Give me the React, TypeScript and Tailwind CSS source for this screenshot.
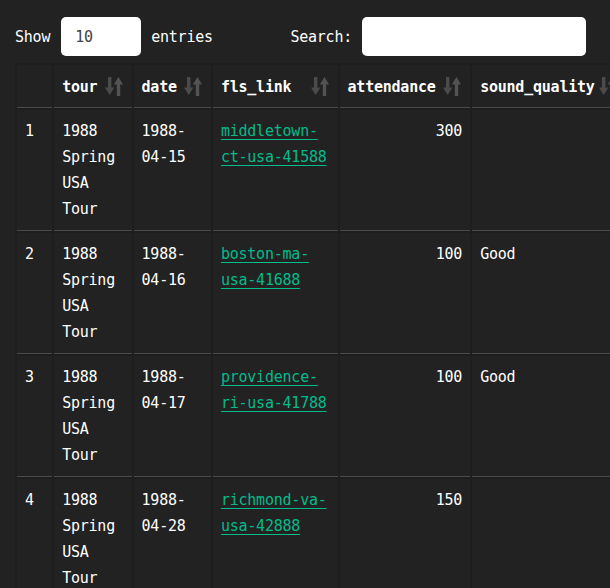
import React from "react";

const FONT = { fontFamily: '"DejaVu Sans Mono", "Liberation Mono", monospace' };

interface Show {
  tour: string;
  date: string;
  link: string;
  attendance: number;
  sound: string;
}

const shows: Show[] = [
  { tour: "1988 Spring USA Tour", date: "1988-04-15", link: "middletown-ct-usa-41588", attendance: 300, sound: "" },
  { tour: "1988 Spring USA Tour", date: "1988-04-16", link: "boston-ma-usa-41688", attendance: 100, sound: "Good" },
  { tour: "1988 Spring USA Tour", date: "1988-04-17", link: "providence-ri-usa-41788", attendance: 100, sound: "Good" },
  { tour: "1988 Spring USA Tour", date: "1988-04-28", link: "richmond-va-usa-42888", attendance: 150, sound: "" },
  { tour: "1988 Spring USA Tour", date: "1988-04-29", link: "trenton-nj-usa-42988", attendance: 200, sound: "" },
];

function SortIcon() {
  return (
    <svg
      className="absolute right-[9px] top-1/2 -translate-y-1/2"
      width="18"
      height="20"
      viewBox="0 0 18 20"
    >
      {/* down arrow */}
      <rect x="3" y="1" width="3.4" height="12" fill="#4b4b4b" />
      <polygon points="0,11.5 9.4,11.5 4.7,19" fill="#4b4b4b" />
      {/* up arrow */}
      <rect x="11.8" y="7" width="3.4" height="13" fill="#535353" />
      <polygon points="8.8,8.5 18,8.5 13.5,1" fill="#535353" />
    </svg>
  );
}

function Th({ children, width }: { children: React.ReactNode; width: string }) {
  return (
    <th
      className={`relative bg-[#222] border-b border-[#4a4a4a] pl-2 pr-[30px] pt-[9px] pb-[7px] text-left font-bold text-white align-bottom whitespace-nowrap ${width}`}
    >
      {children}
      <SortIcon />
    </th>
  );
}

const td = "bg-[#222] border-b border-[#4a4a4a] p-2 align-top";

export default function App() {
  return (
    <div
      className="h-screen w-full overflow-hidden bg-[#222] text-white text-[15px] leading-[26px] tracking-[-0.23px]"
      style={FONT}
    >
      {/* controls */}
      <div className="flex items-center justify-between pl-[15px] pr-[24px] pt-[17px]">
        <label className="flex items-center">
          <span>Show</span>
          <span className="ml-[11px] flex h-[39px] w-[80px] items-center rounded-[5px] bg-white pl-[14px] text-[#444]">
            10
          </span>
          <span className="ml-[10px]">entries</span>
        </label>
        <label className="flex items-center">
          <span>Search:</span>
          <span className="ml-[10px] block h-[39px] w-[224px] rounded-[5px] bg-white" />
        </label>
      </div>

      {/* table */}
      <div className="pl-[15px] mt-[7px]">
        <table className="table-fixed w-[613px] border-separate border-spacing-[2.4px] bg-[#1e1e1e]">
          <thead>
            <tr>
              <th className="w-[35px] bg-[#222] border-b border-[#4a4a4a] py-2" />
              <Th width="w-[77px]">tour</Th>
              <Th width="w-[77px]">date</Th>
              <Th width="w-[124px]">fls_link</Th>
              <Th width="w-[130px]">attendance</Th>
              <Th width="w-[153px]">sound_quality</Th>
            </tr>
          </thead>
          <tbody>
            {shows.map((s, i) => (
              <tr key={s.link}>
                <td className={td}>{i + 1}</td>
                <td className={td}>{s.tour}</td>
                <td className={td}>
                  {s.date.slice(0, 5)}
                  <wbr />
                  {s.date.slice(5)}
                </td>
                <td className={td}>
                  <a href="#" className="text-[#00bc8c] underline underline-offset-[3px]">
                    {s.link}
                  </a>
                </td>
                <td className={`${td} text-right`}>{s.attendance}</td>
                <td className={td}>{s.sound}</td>
              </tr>
            ))}
          </tbody>
        </table>
      </div>
    </div>
  );
}
